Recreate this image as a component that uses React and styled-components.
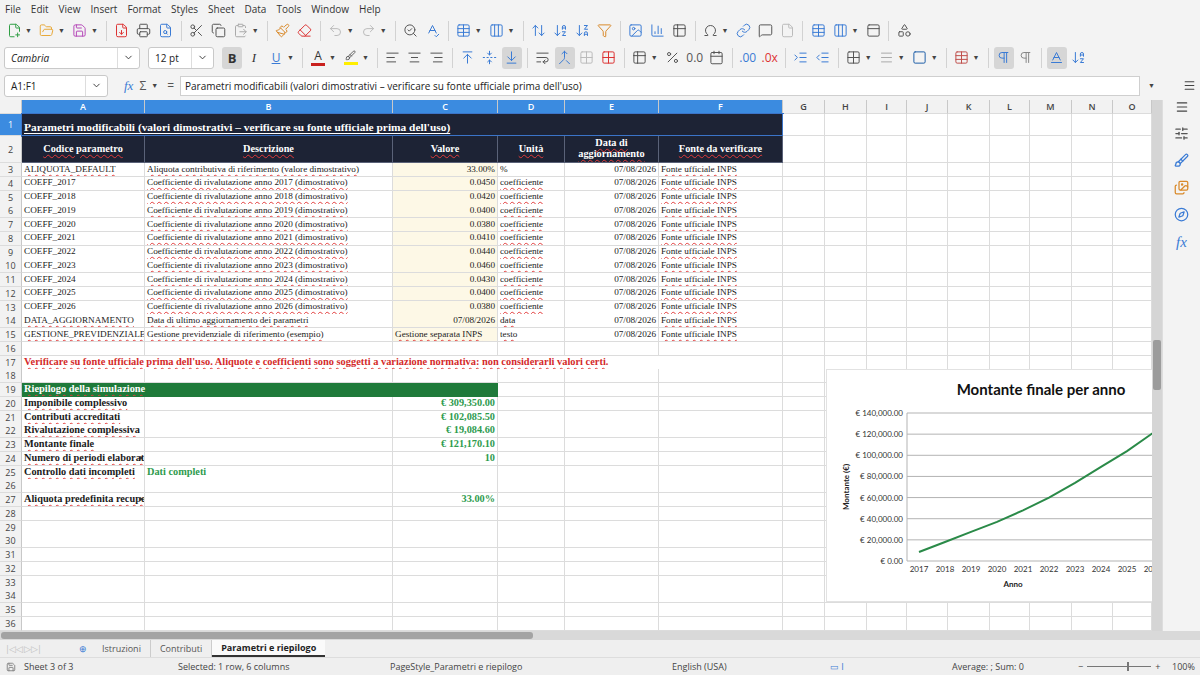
import React from "react";
import styled, { createGlobalStyle } from "styled-components";
import {
  FilePlus2, FolderOpen, Save, FileDown, Printer, FileSearch, Scissors, Copy, ClipboardPaste,
  Paintbrush, Eraser, Undo2, Redo2, SearchCheck, SpellCheck, Table, Columns3, ArrowDownAZ,
  ArrowDownZA, ArrowUpDown, Filter, Image, BarChart3, Table2, Omega, Link, MessageSquare, File,
  PanelTop, Shapes, AlignLeft, AlignCenter, AlignRight, ArrowUpToLine, FoldVertical,
  ArrowDownToLine, WrapText, Merge, Grid2x2, Percent, Calendar, IndentIncrease, IndentDecrease,
  Square, Menu, SlidersHorizontal, Brush, Images, Compass, ChevronDown, Pilcrow, Baseline
} from "lucide-react";

const GlobalStyle = createGlobalStyle`
  html, body { margin: 0; padding: 0; background: #efefef; }
  body { font-family: "Open Sans", "Noto Sans", sans-serif; font-size: 10px; color: #222; }
  * { box-sizing: border-box; }
`;

const COLS = "22px 123px 248px 105px 67px 94px 124px 42px 42px 40px 41px 42px 40px 42px 41px 39px";

const Page = styled.div`
  width: 1200px; height: 675px; overflow: hidden; display: flex; flex-direction: column; background: #efefef;
  & > * { flex-shrink: 0; }
`;
const MenuBar = styled.div`
  height: 17px; display: flex; align-items: center; background: #f3f3f3;
`;
const MenuItem = styled.span`
  padding: 0 5px; font-size: 10px; color: #333;
`;
const ToolBar = styled.div`
  height: 27px; display: flex; align-items: center; padding-left: 4px; gap: 2px; background: #f3f3f3;
`;
const TBtn = styled.div`
  width: ${p => p.$w || 20}px; height: 22px; display: flex; align-items: center; justify-content: center;
  border-radius: 3px; background: ${p => (p.$on ? "#d6d6d6" : "transparent")}; color: ${p => p.$c || "#555"};
  font-size: 12px;
`;
const Caret = styled.span`
  font-size: 7px; color: #444; margin: 0 3px 0 -1px;
`;
const Sep = styled.div`
  width: 1px; height: 20px; background: #d2d2d2; margin: 0 3px;
`;
const Combo = styled.div`
  width: ${p => p.$w}px; height: 22px; background: #fff; border: 1px solid #c9c9c9; border-radius: 3px;
  display: flex; align-items: center; margin-right: 6px;
`;
const ComboText = styled.div`
  flex: 1; padding-left: 6px; font-size: 10px; font-style: ${p => (p.$italic ? "italic" : "normal")};
  color: #222;
`;
const ComboBtn = styled.div`
  width: 22px; height: 100%; display: flex; align-items: center; justify-content: center;
  border-left: 1px solid #ddd; color: #333;
`;
const ColorBar = styled.span`
  display: flex; flex-direction: column; align-items: center; line-height: 1;
  &::after { content: ""; width: 14px; height: 3px; background: ${p => p.$c}; margin-top: 1px; }
`;
const FormulaRow = styled.div`
  height: 29px; display: flex; align-items: center; padding: 0 4px; background: #f3f3f3;
`;
const FormulaInput = styled.div`
  flex: 1; height: 20px; background: #fff; border: 1px solid #cfcfcf; display: flex; align-items: center;
  padding-left: 4px; font-size: 10px; color: #222;
`;
const FxIcons = styled.div`
  display: flex; align-items: center; gap: 6px; padding: 0 6px 0 10px; color: #3a7bd5; font-size: 12px;
`;
const Main = styled.div`
  height: 531px; display: flex;
`;
const SheetArea = styled.div`
  width: 1152px; position: relative; overflow: hidden; background: #fff;
`;
const VScroll = styled.div`
  width: 10px; background: #d5d5d5; position: relative;
  &::after { content: ""; position: absolute; left: 1px; right: 1px; top: 240px; height: 50px; background: #9c9c9c; border-radius: 2px; }
`;
const SideBar = styled.div`
  width: 38px; background: #f3f3f3; display: flex; flex-direction: column; align-items: center;
  gap: 12px; color: #3a7bd5; border-left: 1px solid #ddd;
`;
const Row = styled.div`
  display: grid; grid-template-columns: ${COLS}; height: ${p => p.$h}px;
`;
const RowHead = styled.div`
  background: ${p => (p.$sel ? "#3b8be0" : "#f2f2f2")}; color: ${p => (p.$sel ? "#fff" : "#444")};
  border-right: 1px solid #c8c8c8; border-bottom: 1px solid #dcdcdc;
  font-size: 9px; display: flex; align-items: center; justify-content: center;
`;
const ColHead = styled(RowHead)`
  font-weight: 600;
`;
const Cell = styled.div`
  grid-column: ${p => p.$span || "auto"};
  background: ${p => p.$bg || "#fff"};
  color: ${p => p.$color || "#1b1b1b"};
  border-right: 1px solid ${p => p.$bc || "#dcdcdc"};
  border-bottom: 1px solid ${p => p.$bc || "#dcdcdc"};
  font-family: "Liberation Serif", "DejaVu Serif", serif;
  font-size: ${p => p.$fs || 9.2}px;
  font-weight: ${p => (p.$bold ? 700 : 400)};
  display: flex; align-items: ${p => p.$valign || "center"};
  justify-content: ${p => (p.$align === "right" ? "flex-end" : p.$align === "center" ? "center" : "flex-start")};
  text-align: ${p => p.$align || "left"};
  padding: 0 2px; white-space: ${p => (p.$wrap ? "normal" : "nowrap")}; overflow: hidden; line-height: 1.05;
  position: relative;
  ${p => p.$clip && `&::after { content: ""; position: absolute; right: 1px; top: 4px; border-left: 3px solid #333; border-top: 2.5px solid transparent; border-bottom: 2.5px solid transparent; }`}
`;
const Txt = styled.span`
  text-decoration: ${p => (p.$spell ? "underline wavy #e23b3b" : "none")};
  text-decoration-thickness: 1px; text-underline-offset: 2px;
  ${p => p.$ul && "text-decoration: underline; text-decoration-color: #fff;"}
`;
const ChartBox = styled.div`
  position: absolute; left: 826px; top: 269px; width: 340px; height: 233px; background: #fff;
  border: 1px solid #e2e2e2;
`;
const Tabs = styled.div`
  height: 17px; display: flex; align-items: center; background: #efefef; font-size: 9px; color: #444;
`;
const NavArrows = styled.div`
  width: 64px; margin-left: 5px; color: #c0c0c0; font-size: 9px; letter-spacing: -1px; white-space: nowrap;
`;
const Tab = styled.div`
  padding: 0 9px; height: 100%; display: flex; align-items: center;
  border-right: ${p => (p.$active ? "none" : "1px solid #ccc")};
  font-weight: ${p => (p.$active ? 700 : 400)}; color: ${p => (p.$active ? "#222" : "#555")};
  background: ${p => (p.$active ? "#fafafa" : "transparent")};
  border-bottom: ${p => (p.$active ? "2px solid #333" : "none")};
`;
const HScroll = styled.div`
  height: 9px; background: #d9d9d9; position: relative;
  &::after { content: ""; position: absolute; left: 1px; top: 1px; bottom: 1px; width: 532px; background: #a3a3a3; border-radius: 3px; }
`;
const Status = styled.div`
  height: 18px; display: grid; grid-template-columns: 178px 212px 282px 158px 122px 126px 94px 28px;
  align-items: center; font-size: 9px; line-height: 1; color: #444; background: #efefef; border-top: 1px solid #ddd;
  & > span:first-child { padding-left: 6px; display: flex; gap: 8px; align-items: center; }
`;
const Zoom = styled.span`
  display: flex; align-items: center; gap: 4px; color: #444;
`;
const Slider = styled.span`
  width: 64px; height: 1px; background: #777; position: relative;
  &::after { content: ""; position: absolute; left: 40px; top: -4px; width: 2px; height: 9px; background: #777; }
`;

const Icon = ({ I, c, on, w, caret }) => (
  <>
    <TBtn $c={c} $on={on} $w={w}><I size={15} strokeWidth={1.6} /></TBtn>
    {caret && <Caret>▼</Caret>}
  </>
);

const coeffs = ["0.0450", "0.0420", "0.0400", "0.0380", "0.0410", "0.0440", "0.0460", "0.0430", "0.0400", "0.0380"];
const colLetters = ["A", "B", "C", "D", "E", "F", "G", "H", "I", "J", "K", "L", "M", "N", "O"];

function Blank({ n }) {
  return Array.from({ length: n }, (_, i) => <Cell key={"b" + i} />);
}

function DataRow({ n, a, b, c, d, e, f, cLeft, spellA }) {
  return (
    <Row $h={13.75}>
      <RowHead>{n}</RowHead>
      <Cell><Txt $spell={spellA}>{a}</Txt></Cell>
      <Cell><Txt $spell>{b}</Txt></Cell>
      <Cell $bg="#fdf8e6" $align={cLeft ? "left" : "right"}><Txt $spell={cLeft}>{c}</Txt></Cell>
      <Cell><Txt $spell={d !== "%"}>{d}</Txt></Cell>
      <Cell $align="right">{e}</Cell>
      <Cell><Txt $spell>{f}</Txt></Cell>
      <Blank n={9} />
    </Row>
  );
}

function EmptyRow({ n }) {
  return (
    <Row $h={13.75}>
      <RowHead>{n}</RowHead>
      <Blank n={15} />
    </Row>
  );
}

function SumRow({ n, label, value, clip, bText }) {
  return (
    <Row $h={13.75}>
      <RowHead>{n}</RowHead>
      <Cell $bold $fs={10.3} $clip={clip}><Txt $spell>{label}</Txt></Cell>
      <Cell $bold $color="#2e9b4e" $fs={10.3}>{bText}</Cell>
      <Cell $bold $color="#2e9b4e" $align="right" $fs={10.3}>{value}</Cell>
      <Blank n={12} />
    </Row>
  );
}

const vals = [8500, 18000, 27500, 37000, 48000, 60000, 74000, 89000, 104000, 121170];

function Chart() {
  const x0 = 92, step = 26, yb = 191, yt = 43;
  const y = v => yb - (v / 140000) * (yb - yt);
  const pts = vals.map((v, i) => `${x0 + i * step},${y(v).toFixed(1)}`).join(" ");
  const ticks = [0, 20000, 40000, 60000, 80000, 100000, 120000, 140000];
  return (
    <svg width="340" height="233" style={{ fontFamily: "Lato, 'Liberation Sans', sans-serif" }}>
      <text x="214" y="25" textAnchor="middle" fontSize="15" fontWeight="700" fill="#111">Montante finale per anno</text>
      {ticks.map(t => (
        <g key={t}>
          <line x1="80" x2="340" y1={y(t)} y2={y(t)} stroke="#b3b3b3" strokeWidth="1" />
          <text x="76" y={y(t) + 3} textAnchor="end" fontSize="8" fill="#333">
            € {t === 0 ? "0.00" : t.toLocaleString("en-US") + ".00"}
          </text>
        </g>
      ))}
      <line x1="80" x2="80" y1={yt} y2={yb} stroke="#b3b3b3" />
      {vals.map((_, i) => (
        <text key={i} x={x0 + i * step} y={yb + 11} textAnchor="middle" fontSize="8" fill="#333">{2017 + i}</text>
      ))}
      <polyline points={pts} fill="none" stroke="#2a8a48" strokeWidth="2" />
      <text x="186" y="217" textAnchor="middle" fontSize="8" fontWeight="700" fill="#222">Anno</text>
      <text transform="translate(22,117) rotate(-90)" textAnchor="middle" fontSize="8" fontWeight="700" fill="#222">Montante (€)</text>
    </svg>
  );
}

export default function App() {
  const menus = ["File", "Edit", "View", "Insert", "Format", "Styles", "Sheet", "Data", "Tools", "Window", "Help"];
  return (
    <Page>
      <GlobalStyle />
      <MenuBar>{menus.map(m => <MenuItem key={m}>{m}</MenuItem>)}</MenuBar>
      <ToolBar>
        <Icon I={FilePlus2} c="#2f9e44" caret />
        <Icon I={FolderOpen} c="#e8a93a" caret />
        <Icon I={Save} c="#b548b8" caret />
        <Sep />
        <Icon I={FileDown} c="#d33" />
        <Icon I={Printer} c="#555" />
        <Icon I={FileSearch} c="#3a7bd5" />
        <Sep />
        <Icon I={Scissors} />
        <Icon I={Copy} />
        <Icon I={ClipboardPaste} c="#aaa" caret />
        <Sep />
        <Icon I={Paintbrush} c="#d98a2b" />
        <Icon I={Eraser} c="#d33" />
        <Sep />
        <Icon I={Undo2} c="#bbb" caret />
        <Icon I={Redo2} c="#bbb" caret />
        <Sep />
        <Icon I={SearchCheck} />
        <Icon I={SpellCheck} c="#3a7bd5" />
        <Sep />
        <Icon I={Table} c="#3a7bd5" caret />
        <Icon I={Columns3} c="#3a7bd5" caret />
        <Sep />
        <Icon I={ArrowUpDown} c="#3a7bd5" />
        <Icon I={ArrowDownAZ} c="#3a7bd5" />
        <Icon I={ArrowDownZA} c="#3a7bd5" />
        <Icon I={Filter} c="#d98a2b" />
        <Sep />
        <Icon I={Image} c="#3a7bd5" />
        <Icon I={BarChart3} c="#3a7bd5" />
        <Icon I={Table2} />
        <Sep />
        <Icon I={Omega} caret />
        <Icon I={Link} c="#3a7bd5" />
        <Icon I={MessageSquare} />
        <Icon I={File} c="#bbb" />
        <Sep />
        <Icon I={Table} c="#3a7bd5" />
        <Icon I={Columns3} c="#3a7bd5" caret />
        <Icon I={PanelTop} />
        <Sep />
        <Icon I={Shapes} />
      </ToolBar>
      <ToolBar>
        <Combo $w={136}><ComboText $italic>Cambria</ComboText><ComboBtn><ChevronDown size={11} /></ComboBtn></Combo>
        <Combo $w={66}><ComboText>12 pt</ComboText><ComboBtn><ChevronDown size={11} /></ComboBtn></Combo>
        <TBtn $on $c="#333"><b style={{ fontSize: 13 }}>B</b></TBtn>
        <TBtn $c="#333"><i style={{ fontSize: 13, fontFamily: "Liberation Serif" }}>I</i></TBtn>
        <TBtn $c="#3a7bd5"><u style={{ fontSize: 12 }}>U</u></TBtn><Caret>▼</Caret>
        <Sep />
        <TBtn $c="#333"><ColorBar $c="#c9211e">A</ColorBar></TBtn><Caret>▼</Caret>
        <TBtn $c="#555"><ColorBar $c="#ffee00"><Brush size={11} /></ColorBar></TBtn><Caret>▼</Caret>
        <Sep />
        <Icon I={AlignLeft} />
        <Icon I={AlignCenter} />
        <Icon I={AlignRight} />
        <Sep />
        <Icon I={ArrowUpToLine} c="#3a7bd5" />
        <Icon I={FoldVertical} c="#3a7bd5" />
        <Icon I={ArrowDownToLine} c="#3a7bd5" on />
        <Sep />
        <Icon I={WrapText} />
        <Icon I={Merge} c="#3a7bd5" on />
        <Icon I={Grid2x2} c="#bbb" />
        <Icon I={Grid2x2} c="#d33" />
        <Sep />
        <Icon I={Table2} caret />
        <Icon I={Percent} />
        <TBtn $c="#555">0.0</TBtn>
        <Icon I={Calendar} />
        <Sep />
        <TBtn $c="#3a7bd5">.00</TBtn>
        <TBtn $c="#d33">.0x</TBtn>
        <Sep />
        <Icon I={IndentIncrease} c="#3a7bd5" />
        <Icon I={IndentDecrease} c="#3a7bd5" />
        <Sep />
        <Icon I={Grid2x2} caret />
        <Icon I={Menu} c="#aaa" caret />
        <Icon I={Square} c="#1f5fa8" caret />
        <Sep />
        <Icon I={Table} c="#c0504d" caret />
        <Sep />
        <Icon I={Pilcrow} c="#3a7bd5" on />
        <Icon I={Pilcrow} c="#888" />
        <Sep />
        <Icon I={Baseline} c="#3a7bd5" on />
        <Icon I={ArrowDownAZ} c="#3a7bd5" />
      </ToolBar>
      <FormulaRow>
        <Combo $w={104}><ComboText>A1:F1</ComboText><ComboBtn><ChevronDown size={11} /></ComboBtn></Combo>
        <FxIcons>
          <i style={{ fontFamily: "Liberation Serif", fontSize: 13 }}>fx</i>
          <span style={{ color: "#555" }}>Σ</span><Caret>▼</Caret>
          <span style={{ color: "#555" }}>=</span>
        </FxIcons>
        <FormulaInput>Parametri modificabili (valori dimostrativi – verificare su fonte ufficiale prima dell'uso)</FormulaInput>
        <Caret style={{ margin: "0 8px" }}>▼</Caret>
        <span style={{ width: 20 }} />
        <Menu size={13} color="#444" />
      </FormulaRow>
      <Main>
        <SheetArea>
          <Row $h={14}>
            <RowHead />
            {colLetters.map((c, i) => <ColHead key={c} $sel={i < 6}>{c}</ColHead>)}
          </Row>
          <Row $h={22}>
            <RowHead $sel>1</RowHead>
            <Cell $span="2 / 8" $bg="#1d2335" $color="#fff" $bold $fs={11.4} $valign="flex-end" $bc="#3b74c8"
              style={{ paddingBottom: 1, outline: "1px solid #3b74c8" }}>
              <Txt $ul>Parametri modificabili (valori dimostrativi – verificare su fonte ufficiale prima dell'uso)</Txt>
            </Cell>
            <Blank n={9} />
          </Row>
          <Row $h={27}>
            <RowHead>2</RowHead>
            {["Codice parametro", "Descrizione", "Valore", "Unità", "Data di aggiornamento", "Fonte da verificare"].map((h, i) => (
              <Cell key={h} $bg="#1d2335" $color="#fff" $bold $align="center" $fs={10.3} $bc="#5a6278" $wrap={i === 4}>
                <Txt $spell>{h}</Txt>
              </Cell>
            ))}
            <Blank n={9} />
          </Row>
          <DataRow n={3} a="ALIQUOTA_DEFAULT" spellA b="Aliquota contributiva di riferimento (valore dimostrativo)" c="33.00%" d="%" e="07/08/2026" f="Fonte ufficiale INPS" />
          {coeffs.map((c, i) => (
            <DataRow key={i} n={4 + i} a={`COEFF_${2017 + i}`} b={`Coefficiente di rivalutazione anno ${2017 + i} (dimostrativo)`} c={c} d="coefficiente" e="07/08/2026" f="Fonte ufficiale INPS" />
          ))}
          <DataRow n={14} a="DATA_AGGIORNAMENTO" spellA b="Data di ultimo aggiornamento dei parametri" c="07/08/2026" d="data" e="07/08/2026" f="Fonte ufficiale INPS" />
          <DataRow n={15} a="GESTIONE_PREVIDENZIALE" spellA b="Gestione previdenziale di riferimento (esempio)" c="Gestione separata INPS" cLeft d="testo" e="07/08/2026" f="Fonte ufficiale INPS" />
          <EmptyRow n={16} />
          <Row $h={13.75}>
            <RowHead>17</RowHead>
            <Cell $span="2 / 8" $color="#d42a2a" $bold $fs={10.4}>
              <Txt $spell>Verificare su fonte ufficiale prima dell'uso. Aliquote e coefficienti sono soggetti a variazione normativa: non considerarli valori certi.</Txt>
            </Cell>
            <Blank n={9} />
          </Row>
          <EmptyRow n={18} />
          <Row $h={13.75}>
            <RowHead>19</RowHead>
            <Cell $span="2 / 5" $bg="#1f7a3a" $color="#fff" $bold $fs={10.4} $bc="#1f7a3a"><Txt $spell>Riepilogo della simulazione</Txt></Cell>
            <Blank n={12} />
          </Row>
          <SumRow n={20} label="Imponibile complessivo" value="€ 309,350.00" />
          <SumRow n={21} label="Contributi accreditati" value="€ 102,085.50" />
          <SumRow n={22} label="Rivalutazione complessiva" value="€ 19,084.60" />
          <SumRow n={23} label="Montante finale" value="€ 121,170.10" />
          <SumRow n={24} label="Numero di periodi elaborati" value="10" clip />
          <SumRow n={25} label="Controllo dati incompleti" bText="Dati completi" />
          <EmptyRow n={26} />
          <SumRow n={27} label="Aliquota predefinita recuperata" value="33.00%" clip />
          {Array.from({ length: 9 }, (_, i) => <EmptyRow key={i} n={28 + i} />)}
          <ChartBox><Chart /></ChartBox>
        </SheetArea>
        <VScroll />
        <SideBar>
          <Menu size={14} color="#444" />
          <SlidersHorizontal size={15} color="#555" />
          <Brush size={15} />
          <Images size={15} color="#d98a2b" />
          <Compass size={15} />
          <i style={{ fontFamily: "Liberation Serif", fontSize: 15 }}>fx</i>
        </SideBar>
      </Main>
      <HScroll />
      <Tabs>
        <NavArrows>|◁ ◁ ▷ ▷|</NavArrows>
        <span style={{ color: "#3a7bd5", margin: "0 6px 0 10px" }}>⊕</span>
        <Tab>Istruzioni</Tab>
        <Tab>Contributi</Tab>
        <Tab $active>Parametri e riepilogo</Tab>
      </Tabs>
      <Status>
        <span><Save size={10} color="#777" /> Sheet 3 of 3</span>
        <span>Selected: 1 row, 6 columns</span>
        <span>PageStyle_Parametri e riepilogo</span>
        <span>English (USA)</span>
        <span style={{ color: "#3a7bd5" }}>▭ I</span>
        <span>Average: ; Sum: 0</span>
        <Zoom>−<Slider />+</Zoom>
        <span>100%</span>
      </Status>
    </Page>
  );
}
